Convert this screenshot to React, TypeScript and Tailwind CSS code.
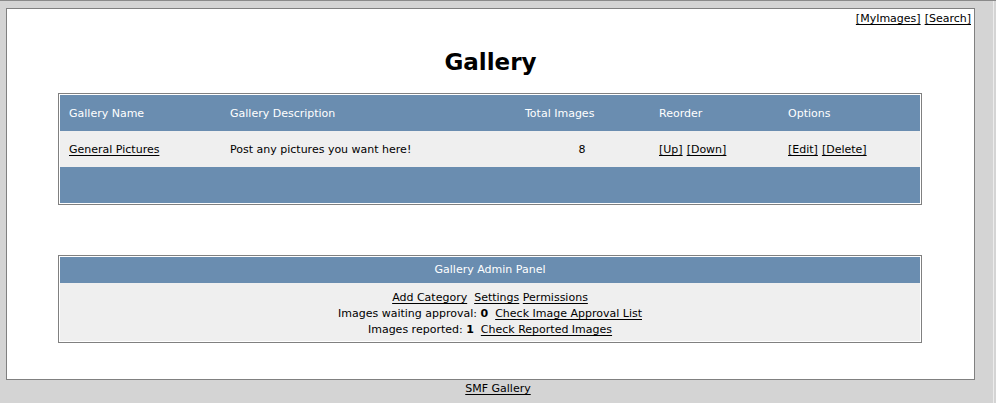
import React from "react";

const cols = "grid grid-cols-[160px_295px_134px_129px_141px]";

const galleries = [
  { name: "General Pictures", description: "Post any pictures you want here!", total: 8 },
];

function Link({ children }: { children: React.ReactNode }) {
  return (
    <a href="#" className="text-black underline underline-offset-2">
      {children}
    </a>
  );
}

export default function App() {
  return (
    <div className="min-h-[403px] bg-[#d4d4d4] border-t border-[#8a8a8a] font-['DejaVu_Sans',sans-serif] text-[11px] text-black">
      <div className="flex">
        <div className="ml-[6px] mt-[7px] w-[969px] h-[372px] bg-white border border-[#808080] flex flex-col">
          {/* top links */}
          <div className="flex justify-end gap-1 pr-[3px] pt-[2px] leading-[16px]">
            <Link>[MyImages]</Link>
            <Link>[Search]</Link>
          </div>

          <h1 className="mt-[21px] text-center text-[23px] font-bold leading-[28px]">Gallery</h1>

          {/* gallery list */}
          <div className="mt-[17px] ml-[51px] w-[864px] border border-[#808080] p-px">
            <div className={`${cols} h-[36px] items-center pt-[3px] bg-[#6a8db0] text-white`}>
              <div className="pl-[9px]">Gallery Name</div>
              <div className="pl-[10px]">Gallery Description</div>
              <div className="pl-[10px]">Total Images</div>
              <div className="pl-[10px]">Reorder</div>
              <div className="pl-[10px]">Options</div>
            </div>
            {galleries.map((g) => (
              <div key={g.name} className={`${cols} h-[36px] items-center pt-[3px] bg-[#efefef]`}>
                <div className="pl-[9px]">
                  <Link>{g.name}</Link>
                </div>
                <div className="pl-[10px]">{g.description}</div>
                <div className="text-center">{g.total}</div>
                <div className="pl-[10px] flex gap-1">
                  <Link>[Up]</Link>
                  <Link>[Down]</Link>
                </div>
                <div className="pl-[10px] flex gap-1">
                  <Link>[Edit]</Link>
                  <Link>[Delete]</Link>
                </div>
              </div>
            ))}
            <div className="h-[36px] bg-[#6a8db0]" />
          </div>

          {/* admin panel */}
          <div className="mt-[50px] ml-[51px] w-[864px] border border-[#808080] p-px">
            <div className="h-[26px] flex items-center justify-center pt-px bg-[#6a8db0] text-white">
              Gallery Admin Panel
            </div>
            <div className="bg-[#efefef] pt-[7px] pb-[3px] text-center leading-[16px]">
              <div>
                <Link>Add Category</Link>&nbsp; <Link>Settings</Link> <Link>Permissions</Link>
              </div>
              <div>
                Images waiting approval: <b>0</b>&nbsp; <Link>Check Image Approval List</Link>
              </div>
              <div>
                Images reported: <b>1</b>&nbsp; <Link>Check Reported Images</Link>
              </div>
            </div>
          </div>
        </div>
        <div className="ml-auto mr-[2px] w-px h-[403px] bg-[#ececec]" />
      </div>
      <div className="-mt-[24px] text-center leading-[16px] pt-[1px]">
        <Link>SMF Gallery</Link>
      </div>
    </div>
  );
}
